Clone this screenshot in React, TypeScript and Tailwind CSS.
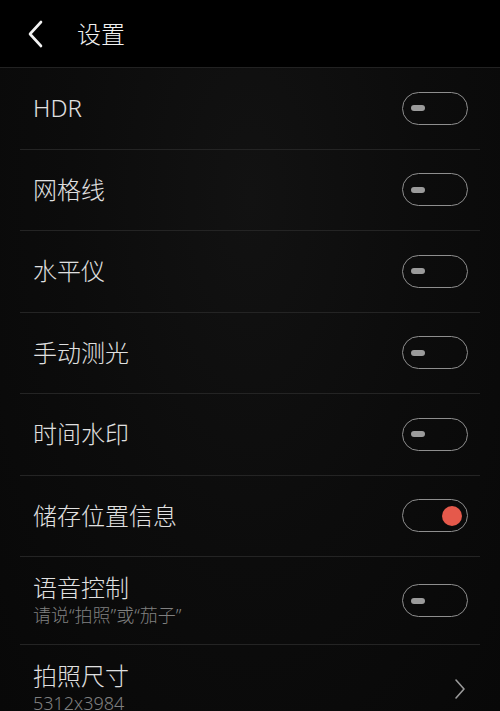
interface SettingRow {
  label: string;
  sub?: string;
  kind: 'toggle' | 'link';
  on?: boolean;
}

const rows: SettingRow[] = [
  { label: 'HDR', kind: 'toggle' },
  { label: '网格线', kind: 'toggle' },
  { label: '水平仪', kind: 'toggle' },
  { label: '手动测光', kind: 'toggle' },
  { label: '时间水印', kind: 'toggle' },
  { label: '储存位置信息', kind: 'toggle', on: true },
  { label: '语音控制', sub: '请说“拍照”或“茄子”', kind: 'toggle' },
  { label: '拍照尺寸', sub: '5312x3984', kind: 'link' },
];

function Toggle({ on }: { on?: boolean }) {
  return (
    <div className="w-[66px] h-[33px] rounded-full border-[1.5px] border-[#8e8e8e] flex items-center shrink-0">
      {on ? (
        <div className="ml-auto mr-[5px] w-[20px] h-[20px] rounded-full bg-[#e5594b]" />
      ) : (
        <div className="ml-[8px] w-[14px] h-[6px] rounded-full bg-[#9b9b9b]" />
      )}
    </div>
  );
}

export default function App() {
  return (
    <div
      className="w-[500px] h-[711px] overflow-hidden bg-black text-[#e6e6e6] font-light"
      style={{ fontFamily: '"Noto Sans", "Noto Sans CJK SC", sans-serif' }}
    >
      {/* Header */}
      <div className="h-[68px] border-b border-[#222] flex items-center bg-black">
        <svg width="18" height="28" viewBox="0 0 18 28" className="ml-[26px]" fill="none">
          <polyline points="15,2 4,14 15,26" stroke="#f2f2f2" strokeWidth="2.6" strokeLinecap="round" strokeLinejoin="round" />
        </svg>
        <span className="ml-[33px] text-[24px] leading-none text-[#f2f2f2]">设置</span>
      </div>

      {/* List */}
      <div className="bg-[radial-gradient(ellipse_at_50%_20%,#121212_0%,#0c0c0c_50%,#080808_100%)] h-[643px]">
        {rows.map((row) => (
          <div
            key={row.label}
            className={`mx-[20px] px-[13px] border-b border-[#242424] flex items-center justify-between ${
              row.sub ? 'h-[88px]' : 'h-[81.5px]'
            }`}
          >
            <div className="flex flex-col">
              <span className="text-[24px] leading-[30px] text-[#e0e0e0]">{row.label}</span>
              {row.sub && (
                <span className="text-[18px] leading-[25px] text-[#808080]">{row.sub}</span>
              )}
            </div>
            {row.kind === 'toggle' ? (
              <div className="-mr-[1px]">
                <Toggle on={row.on} />
              </div>
            ) : (
              <svg width="12" height="22" viewBox="0 0 12 22" fill="none" className="mr-[1px]">
                <polyline points="2,2 10,11 2,20" stroke="#9a9a9a" strokeWidth="1.6" strokeLinecap="round" strokeLinejoin="round" />
              </svg>
            )}
          </div>
        ))}
      </div>
    </div>
  );
}
